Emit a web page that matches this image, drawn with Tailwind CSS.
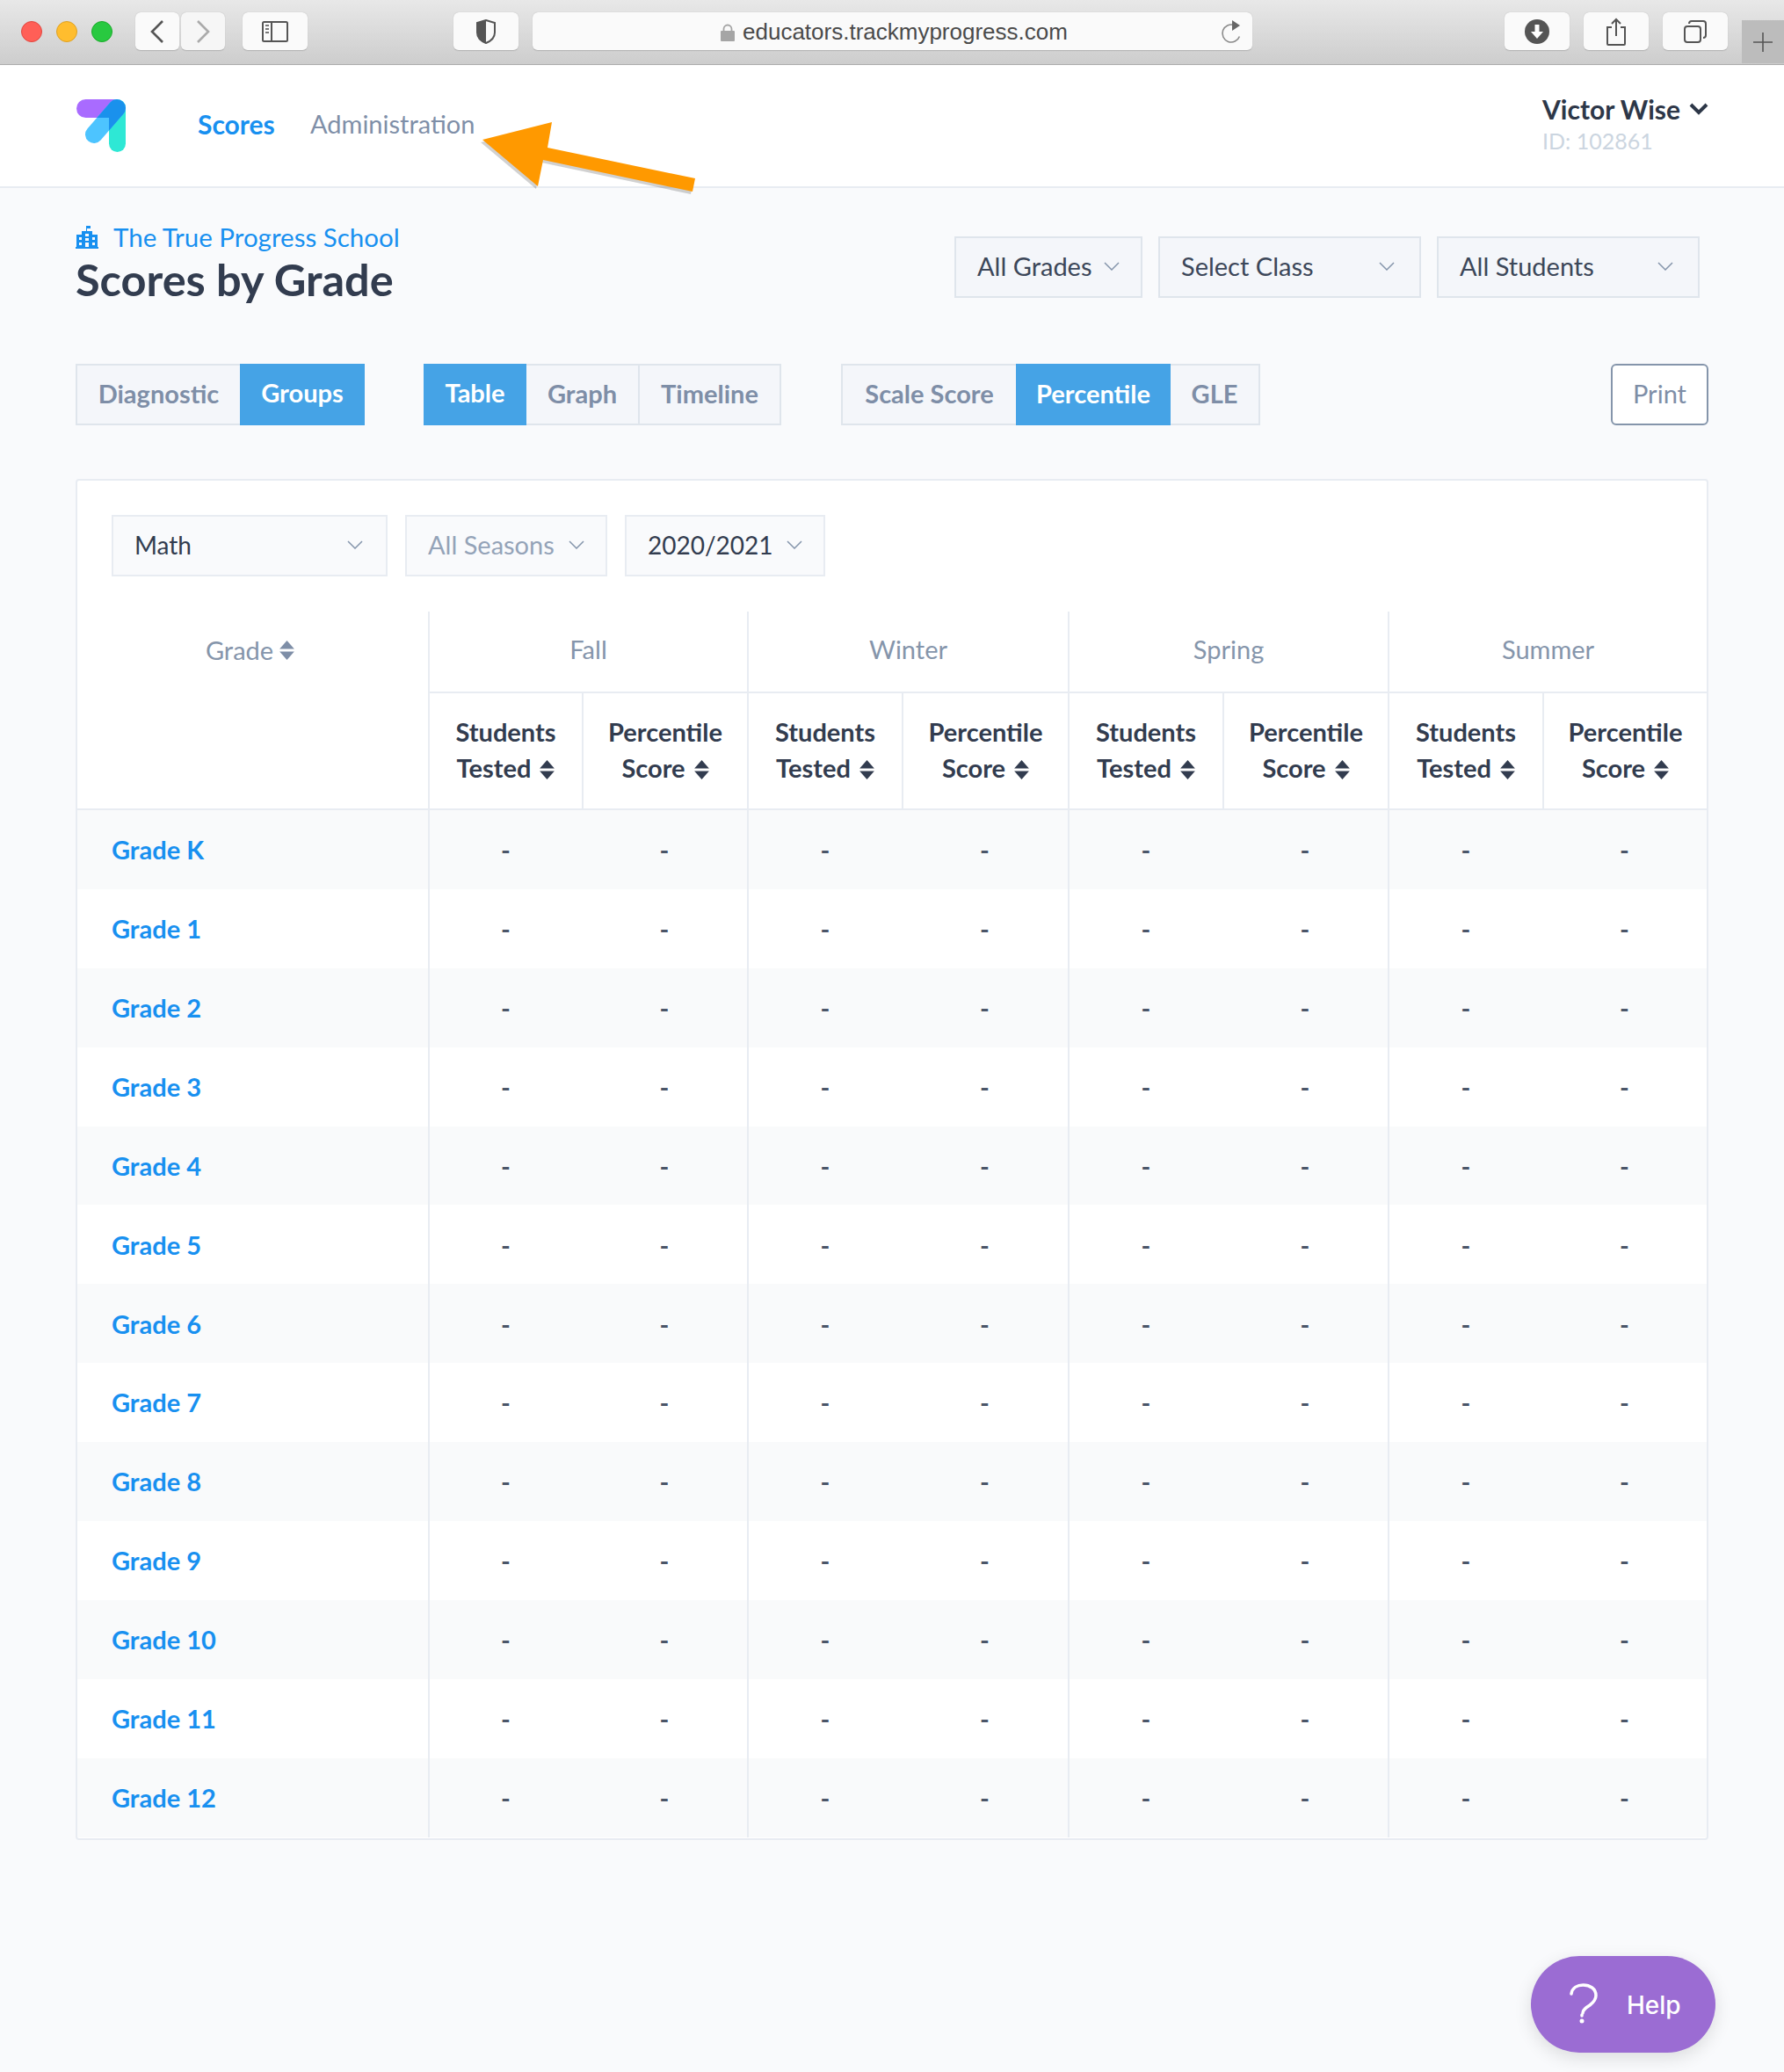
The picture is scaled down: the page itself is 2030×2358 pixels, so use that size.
<!DOCTYPE html>
<html lang="en">

<head>
    <meta charset="UTF-8">
    <meta name="viewport" content="width=device-width, initial-scale=1.0">
    <title>Scores by Grade</title>
    <script src="https://cdn.jsdelivr.net/npm/@tailwindcss/browser@4"></script>
</head>

<body class="bg-[#f9fafc] font-['Lato',sans-serif] text-[#2d3748] min-h-screen relative overflow-hidden">
    <!-- browser chrome -->
    <div class="h-[74px] flex items-start pt-[14px] bg-gradient-to-b from-[#e8e8e8] to-[#cdcdcd] border-b border-[#adadad] relative">
        <div class="flex gap-[16px] ml-[24px] mt-[10px]">
            <span class="w-[24px] h-[24px] rounded-full bg-[#ff5f57] border border-[#e2463f]"></span>
            <span class="w-[24px] h-[24px] rounded-full bg-[#ffbd2e] border border-[#dea123]"></span>
            <span class="w-[24px] h-[24px] rounded-full bg-[#28c940] border border-[#1aab29]"></span>
        </div>
        <div class="ml-[26px] w-[50px] h-[44px] rounded-[6px] bg-[#fafafa] border-b border-[#b5b5b5] shadow-[0_0_1px_#aaa] flex items-center justify-center">
            <svg width="16" height="26" viewBox="0 0 16 26" fill="none" stroke="#555" stroke-width="2.6"><path d="M14 1 2 13l12 12"/></svg>
        </div>
        <div class="ml-[2px] w-[50px] h-[44px] rounded-[6px] bg-[#f6f6f6] border-b border-[#b5b5b5] shadow-[0_0_1px_#aaa] flex items-center justify-center">
            <svg width="16" height="26" viewBox="0 0 16 26" fill="none" stroke="#aaa" stroke-width="2.6"><path d="m2 1 12 12L2 25"/></svg>
        </div>
        <div class="ml-[20px] w-[74px] h-[44px] rounded-[6px] bg-[#fafafa] border-b border-[#b5b5b5] shadow-[0_0_1px_#aaa] flex items-center justify-center">
            <svg width="30" height="24" viewBox="0 0 30 24" fill="none" stroke="#555" stroke-width="2"><rect x="1" y="1" width="28" height="22" rx="1.5"/><path d="M11 1v22"/><path d="M4 5h4M4 9h4M4 13h4" stroke="#777"/></svg>
        </div>
        <div class="ml-[166px] w-[74px] h-[44px] rounded-[6px] bg-[#fafafa] border-b border-[#b5b5b5] shadow-[0_0_1px_#aaa] flex items-center justify-center">
            <svg width="24" height="28" viewBox="0 0 24 28"><path d="M12 1 2 4v11c0 6 5 10 10 12 5-2 10-6 10-12V4z" fill="none" stroke="#555" stroke-width="2"/><path d="M12 1 2 4v11c0 6 5 10 10 12z" fill="#555"/></svg>
        </div>
        <div class="ml-[16px] w-[819px] h-[44px] rounded-[6px] bg-[#fafafa] border-b border-[#b5b5b5] shadow-[0_0_1px_#aaa] flex items-center relative font-['Liberation_Sans',sans-serif] text-[26px] text-[#4a4a4a]">
            <div class="ml-[214px] pt-[2px] flex items-center gap-[9px]">
                <svg width="16" height="20" viewBox="0 0 16 20"><path d="M3.5 9V6a4.5 4.5 0 0 1 9 0v3" fill="none" stroke="#a5a5a5" stroke-width="1.8"/><rect y="8" width="16" height="12" rx="1" fill="#a5a5a5"/></svg>
                <span>educators.trackmyprogress.com</span>
            </div>
            <svg class="absolute right-[12px] top-[8px]" width="24" height="28" viewBox="0 0 24 28" fill="none"><path d="M12 6a10 10 0 1 0 10 10" stroke="#8a8a8a" stroke-width="1.6" transform="rotate(20 12 16)"/><path d="m13 1 9 6-9 6z" fill="#666"/></svg>
        </div>
        <div class="ml-[287px] w-[74px] h-[44px] rounded-[6px] bg-[#fafafa] border-b border-[#b5b5b5] shadow-[0_0_1px_#aaa] flex items-center justify-center">
            <svg width="28" height="28" viewBox="0 0 28 28"><circle cx="14" cy="14" r="14" fill="#555"/><path d="M11.5 6h5v8h4.500L14 22l-7-8h4.500z" fill="#fff"/></svg>
        </div>
        <div class="ml-[16px] w-[74px] h-[44px] rounded-[6px] bg-[#fafafa] border-b border-[#b5b5b5] shadow-[0_0_1px_#aaa] flex items-center justify-center">
            <svg width="24" height="32" viewBox="0 0 24 32" fill="none" stroke="#555" stroke-width="2"><path d="M7 11H2v19a1 1 0 0 0 1 1h18a1 1 0 0 0 1-1V11h-5"/><path d="M12 21V2M7 7l5-5 5 5"/></svg>
        </div>
        <div class="ml-[16px] w-[74px] h-[44px] rounded-[6px] bg-[#fafafa] border-b border-[#b5b5b5] shadow-[0_0_1px_#aaa] flex items-center justify-center">
            <svg width="26" height="26" viewBox="0 0 26 26" fill="none" stroke="#555" stroke-width="2"><rect x="1" y="7" width="18" height="18" rx="3"/><path d="M6 4a3 3 0 0 1 3-3h13a3 3 0 0 1 3 3v13a3 3 0 0 1-3 3"/></svg>
        </div>
        <div class="absolute right-0 top-[23px] w-[48px] h-[49px] bg-[#bcbcbc] flex items-center justify-center">
            <svg width="22" height="22" viewBox="0 0 22 22" stroke="#555" stroke-width="1.6"><path d="M11 0v22M0 11h22"/></svg>
        </div>
    </div>

    <!-- app header -->
    <header class="h-[140px] bg-white border-b-2 border-[#e8ecf2] flex pl-[87px] pr-[86px] relative">
        <svg class="mt-[39px]" width="56" height="60" viewBox="0 0 56 60">
            <defs>
                <clipPath id="logo-clip">
                    <rect width="56" height="21" rx="10.500"/>
                    <rect x="37" width="19" height="60" rx="9.500"/>
                </clipPath>
            </defs>
            <rect width="56" height="21" rx="10.500" fill="#a96bff"/>
            <rect x="37" width="19" height="60" rx="9.500" fill="#2ee8d5"/>
            <path d="M20 40 46 10" stroke="#4dc4ff" stroke-width="20" stroke-linecap="round"/>
            <path d="M20 40 46 10" stroke="#1a91ec" stroke-width="20" stroke-linecap="round" clip-path="url(#logo-clip)"/>
        </svg>
        <nav class="flex items-center ml-[82px] h-[134px]">
            <a class="w-[128px] text-[30px] font-bold text-[#1890f0]">Scores</a>
            <a class="text-[29px] text-[#7f8fa8]">Administration</a>
        </nav>
        <div class="ml-auto w-[189px] pt-[29px] whitespace-nowrap">
            <div class="flex items-center justify-between text-[30px] leading-[42px] font-bold">
                Victor Wise
                <svg width="22" height="14" viewBox="0 0 22 14" fill="none" stroke="#2d3748" stroke-width="4"><path d="m2 2 9 9 9-9"/></svg>
            </div>
            <div class="text-[25px] leading-[30px] text-[#cbd5e0]">ID: 102861</div>
        </div>
    </header>

    <!-- the arrow lies over the header -->
    <svg class="absolute left-[540px] top-[130px]" width="270" height="100" viewBox="540 130 270 100">
        <polygon points="549,159 628,139 623,168 791,203 788,218 618,182 612,212" fill="#000" opacity="0.18" transform="translate(-2 3)"/>
        <polygon points="549,159 628,139 623,168 791,203 788,218 618,182 612,212" fill="#ff9900"/>
    </svg>

    <main class="px-[86px] pt-[55px]">
        <div class="flex justify-between h-[145px]">
            <div class="-mt-[16px]">
                <div class="flex items-center gap-[17px] text-[#1890f0] text-[29.500px] leading-[34px]">
                    <svg width="26" height="26" viewBox="0 0 26 26" fill="#1890f0"><path d="M12 0h5v3h-4v3h6v4h6v14H1V10h6V6h5z"/><path d="M0 24h26v2H0z"/><path d="M4 13h3v3H4zm0 6h3v3H4zm7-10h4v3h-4zm0 5h4v3h-4zm0 5h4v5h-4zm8-6h3v3h-3zm0 6h3v3h-3z" fill="#f9fafc"/></svg>
                    The True Progress School
                </div>
                <h1 class="text-[50.500px] leading-[60px] font-bold text-[#323c4f] mt-[1px]">Scores by Grade</h1>
            </div>
            <div class="flex gap-[18px] pr-[10px] text-[29px] text-[#3c4759]">
                <div class="w-[214px] h-[70px] pb-[2px] bg-[#f4f6fa] border-2 border-[#dfe5ec] flex items-center justify-between pl-[24px] pr-[24px]">
                    All Grades
                    <svg width="18" height="10" viewBox="0 0 18 10" fill="none" stroke="#8595ab" stroke-width="1.500"><path d="m1 1 8 8 8-8"/></svg>
                </div>
                <div class="w-[299px] h-[70px] pb-[2px] bg-[#f4f6fa] border-2 border-[#dfe5ec] flex items-center justify-between pl-[24px] pr-[28px]">
                    Select Class
                    <svg width="18" height="10" viewBox="0 0 18 10" fill="none" stroke="#8595ab" stroke-width="1.500"><path d="m1 1 8 8 8-8"/></svg>
                </div>
                <div class="w-[299px] h-[70px] pb-[2px] bg-[#f4f6fa] border-2 border-[#dfe5ec] flex items-center justify-between pl-[24px] pr-[28px]">
                    All Students
                    <svg width="18" height="10" viewBox="0 0 18 10" fill="none" stroke="#8595ab" stroke-width="1.500"><path d="m1 1 8 8 8-8"/></svg>
                </div>
            </div>
        </div>

        <div class="flex h-[70px] text-[29px] font-bold text-[#7e8ea7]">
            <div class="flex">
                <div class="w-[187px] pb-[2px] bg-[#f4f6fa] border-y-2 border-l-2 border-[#dfe5ec] flex items-center justify-center">Diagnostic</div>
                <div class="w-[142px] pb-[5px] bg-[#45a3e6] text-white flex items-center justify-center">Groups</div>
            </div>
            <div class="flex ml-[67px]">
                <div class="w-[117px] pb-[5px] bg-[#45a3e6] text-white flex items-center justify-center">Table</div>
                <div class="w-[129px] pb-[2px] bg-[#f4f6fa] border-y-2 border-r-2 border-[#dfe5ec] flex items-center justify-center">Graph</div>
                <div class="w-[161px] pb-[2px] bg-[#f4f6fa] border-y-2 border-r-2 border-[#dfe5ec] flex items-center justify-center">Timeline</div>
            </div>
            <div class="flex ml-[68px]">
                <div class="w-[199px] pb-[2px] bg-[#f4f6fa] border-y-2 border-l-2 border-[#dfe5ec] flex items-center justify-center">Scale Score</div>
                <div class="w-[176px] pb-[2px] bg-[#45a3e6] text-white flex items-center justify-center">Percentile</div>
                <div class="w-[102px] pb-[2px] bg-[#f4f6fa] border-y-2 border-r-2 border-[#dfe5ec] flex items-center justify-center">GLE</div>
            </div>
            <div class="ml-auto w-[111px] pb-[2px] rounded-[6px] bg-white border-2 border-[#8595ab] flex items-center justify-center font-normal">Print</div>
        </div>

        <section class="mt-[61px] h-[1549px] bg-white border-2 border-[#e8ecf2] rounded-[4px]">
            <div class="flex gap-[20px] mt-[39px] ml-[39px] h-[70px] text-[29px] text-[#323c4f]">
                <div class="w-[314px] pb-[2px] bg-[#f9fafc] border-2 border-[#e8ecf2] flex items-center justify-between pl-[24px] pr-[26px]">
                    <span class="text-[28px]">Math</span>
                    <svg width="18" height="10" viewBox="0 0 18 10" fill="none" stroke="#8595ab" stroke-width="1.500"><path d="m1 1 8 8 8-8"/></svg>
                </div>
                <div class="w-[230px] pb-[2px] bg-[#f9fafc] border-2 border-[#e8ecf2] flex items-center justify-between pl-[24px] pr-[24px] text-[#94a3b8]">
                    All Seasons
                    <svg width="18" height="10" viewBox="0 0 18 10" fill="none" stroke="#8595ab" stroke-width="1.500"><path d="m1 1 8 8 8-8"/></svg>
                </div>
                <div class="w-[228px] pb-[2px] bg-[#f9fafc] border-2 border-[#e8ecf2] flex items-center justify-between pl-[24px] pr-[24px]">
                    <span class="text-[28px]">2020/2021</span>
                    <svg width="18" height="10" viewBox="0 0 18 10" fill="none" stroke="#8595ab" stroke-width="1.500"><path d="m1 1 8 8 8-8"/></svg>
                </div>
            </div>

            <table class="mt-[40px] w-full table-fixed border-separate border-spacing-0 text-[29px]">
                <colgroup>
                    <col class="w-[399px]">
                    <col class="w-[175px]"><col class="w-[188px]">
                    <col class="w-[176px]"><col class="w-[189px]">
                    <col class="w-[176px]"><col class="w-[188px]">
                    <col class="w-[176px]"><col class="w-[187px]">
                </colgroup>
                <thead>
                    <tr class="font-normal text-[#8595ab]">
                        <th rowspan="2" class="font-normal align-top pt-[22px] border-b-2 border-[#e8ecf2]">
                            <span class="inline-flex items-center gap-[7px] pr-[6px]">Grade
                                <svg width="17" height="22" viewBox="0 0 16 21" fill="#7e8ea7"><path d="M8 0l8 9H0zM8 21 0 12h16z"/></svg>
                            </span>
                        </th>
                        <th colspan="2" class="h-[93px] pb-[5px] font-normal border-l-2 border-b-2 border-[#e8ecf2]">Fall</th>
                        <th colspan="2" class="pb-[5px] font-normal border-l-2 border-b-2 border-[#e8ecf2]">Winter</th>
                        <th colspan="2" class="pb-[5px] font-normal border-l-2 border-b-2 border-[#e8ecf2]">Spring</th>
                        <th colspan="2" class="pb-[5px] font-normal border-l-2 border-b-2 border-[#e8ecf2]">Summer</th>
                    </tr>
                    <tr id="sub-head" class="text-[#323c4f]"></tr>
                </thead>
                <tbody id="rows"></tbody>
            </table>
        </section>
    </main>

    <a class="absolute left-[1742px] top-[2226px] w-[210px] h-[110px] rounded-full bg-[#9b6cd3] shadow-[0_6px_20px_rgba(0,0,0,0.12)] flex items-center text-white font-['Inter',sans-serif] font-medium text-[28px]">
        <svg class="ml-[44px]" width="32" height="48" viewBox="0 0 32 48" fill="none" stroke="#fff" stroke-width="3.500" stroke-linecap="round"><path d="M2 12C3 5 9 2 15.500 2 23 2 30 6 30 14c0 5-3 8-7 11-4 2.500-8 5-8 9"/><circle cx="14" cy="43" r="2.500" fill="#fff" stroke="none"/><path d="M14 36v1"/></svg>
        <span class="ml-[33px] pt-[2px]">Help</span>
    </a>

    <script>
        const sort = '<svg class="inline-block ml-[3px] align-[-2px]" width="17" height="22" viewBox="0 0 16 21" fill="#323c4f"><path d="M8 0l8 9H0zM8 21 0 12h16z"/></svg>';
        const subCols = [];
        for (let s = 0; s < 4; s++) {
            subCols.push(`<th class="h-[133px] pb-[3px] leading-[41px] font-bold border-l-2 border-b-2 border-[#e8ecf2]">Students<br>Tested ${sort}</th>`);
            subCols.push(`<th class="pb-[3px] leading-[41px] font-bold border-l-2 border-b-2 border-[#e8ecf2]">Percentile<br>Score ${sort}</th>`);
        }
        document.getElementById('sub-head').innerHTML = subCols.join('');

        const grades = ['K', '1', '2', '3', '4', '5', '6', '7', '8', '9', '10', '11', '12'];
        document.getElementById('rows').innerHTML = grades.map((g, i) => {
            let cells = `<td class="h-[89.9px] pl-[39px] font-bold text-[#1890f0]">Grade ${g}</td>`;
            for (let c = 0; c < 8; c++) {
                const line = c % 2 === 0 ? 'border-l-2 border-[#e8ecf2]' : '';
                cells += `<td class="text-center font-bold text-[#4a5568] ${line}">-</td>`;
            }
            return `<tr class="${i % 2 === 0 ? 'bg-[#f9fafb]' : 'bg-white'}">${cells}</tr>`;
        }).join('');
    </script>
</body>

</html>
